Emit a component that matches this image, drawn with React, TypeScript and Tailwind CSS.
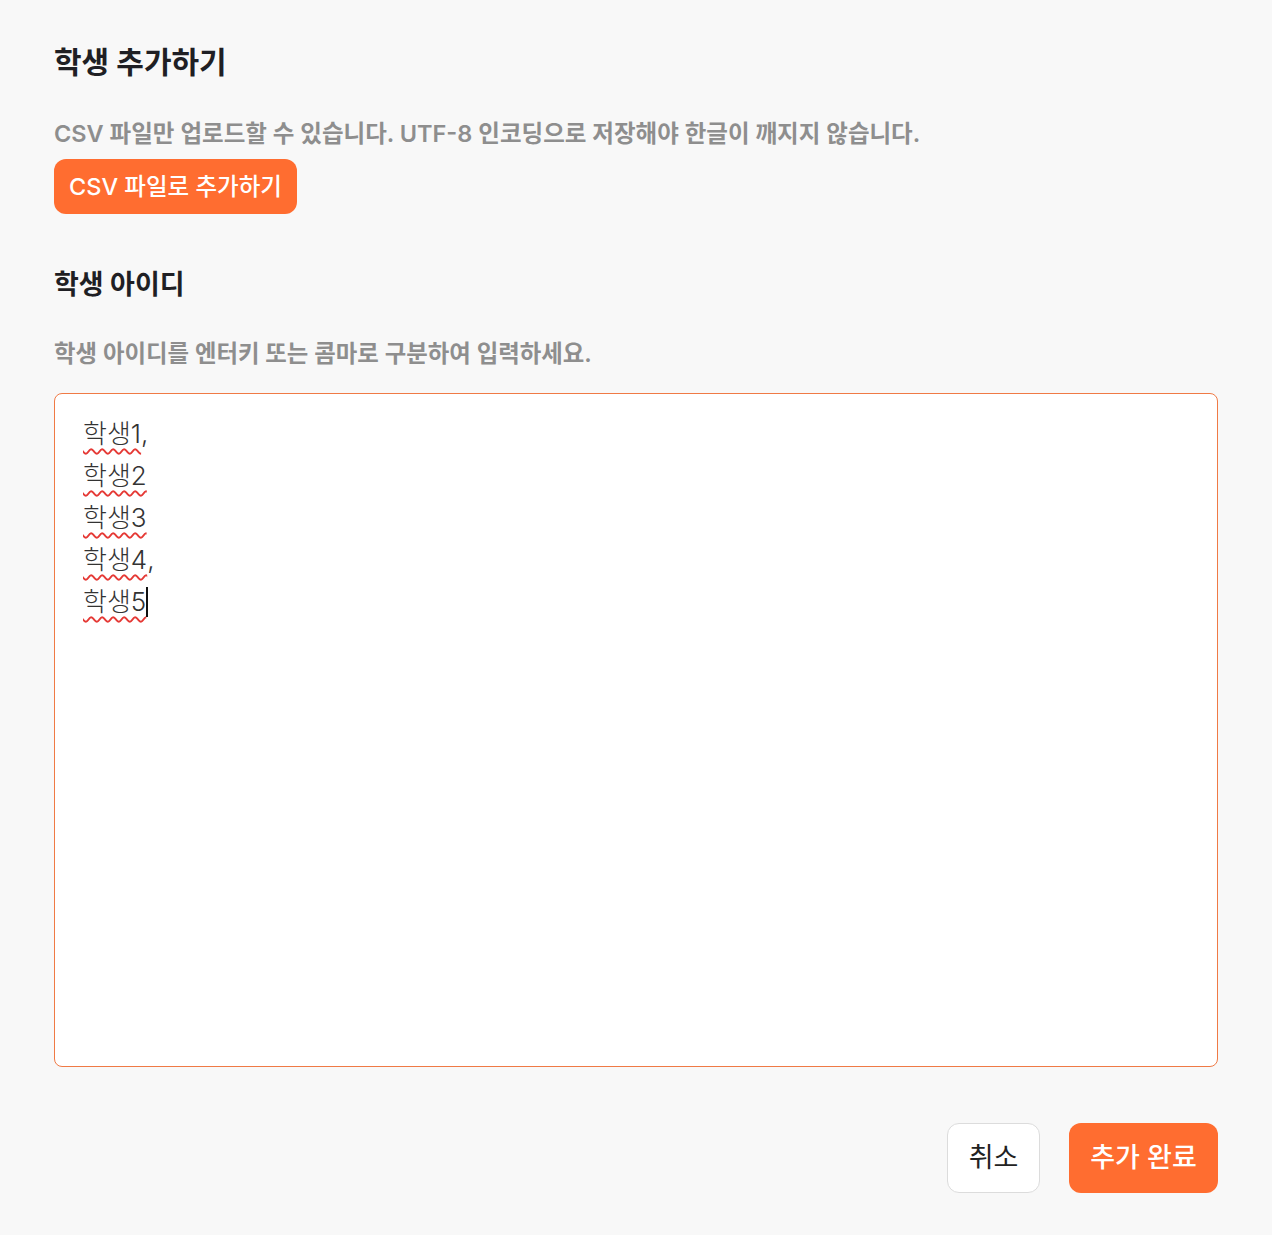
import React from "react";

const lines = [
  { word: "학생1", tail: "," },
  { word: "학생2", tail: "" },
  { word: "학생3", tail: "" },
  { word: "학생4", tail: "," },
  { word: "학생5", tail: "" },
];

export default function App() {
  return (
    <div className="min-h-[1235px] w-full bg-[#f8f8f8] px-[54px] pt-[42px] font-['Inter','Noto_Sans_CJK_KR',sans-serif] text-[#1f1f24]">
      <h1 className="text-[30px] font-bold leading-[40px]">학생 추가하기</h1>

      <p className="mt-[36px] text-[23.5px] font-semibold leading-[32px] text-[#8e8e8e]">
        CSV 파일만 업로드할 수 있습니다. UTF-8 인코딩으로 저장해야 한글이 깨지지 않습니다.
      </p>
      <button
        type="button"
        className="mt-[9px] h-[55px] rounded-[12px] bg-[#ff6d30] px-[15px] text-[23.5px] font-medium text-white"
      >
        CSV 파일로 추가하기
      </button>

      <h2 className="mt-[53px] text-[27px] font-bold leading-[36px]">학생 아이디</h2>
      <p className="mt-[36px] text-[23.4px] font-semibold leading-[30px] text-[#8e8e8e]">
        학생 아이디를 엔터키 또는 콤마로 구분하여 입력하세요.
      </p>

      {/* 입력 영역 */}
      <div className="mt-[24px] h-[674px] w-full rounded-[8px] border border-[#f07a45] bg-white px-[28px] pt-[19px] text-[26px] font-light leading-[42px] text-[#333]">
        {lines.map((l, i) => (
          <div key={i} className="flex items-center">
            <span className="underline decoration-wavy decoration-[#e53935] decoration-[1.5px] underline-offset-[5px]">
              {l.word}
            </span>
            {l.tail}
            {i === lines.length - 1 && <span className="inline-block h-[30px] w-[2px] bg-[#111]" />}
          </div>
        ))}
      </div>

      <div className="mt-[56px] flex justify-end gap-[29px]">
        <button
          type="button"
          className="h-[70px] w-[93px] rounded-[12px] border border-[#dcdcdc] bg-white text-[27px] text-[#222]"
        >
          취소
        </button>
        <button
          type="button"
          className="h-[70px] w-[149px] rounded-[12px] bg-[#ff6d30] text-[27px] font-medium text-white"
        >
          추가 완료
        </button>
      </div>
    </div>
  );
}
